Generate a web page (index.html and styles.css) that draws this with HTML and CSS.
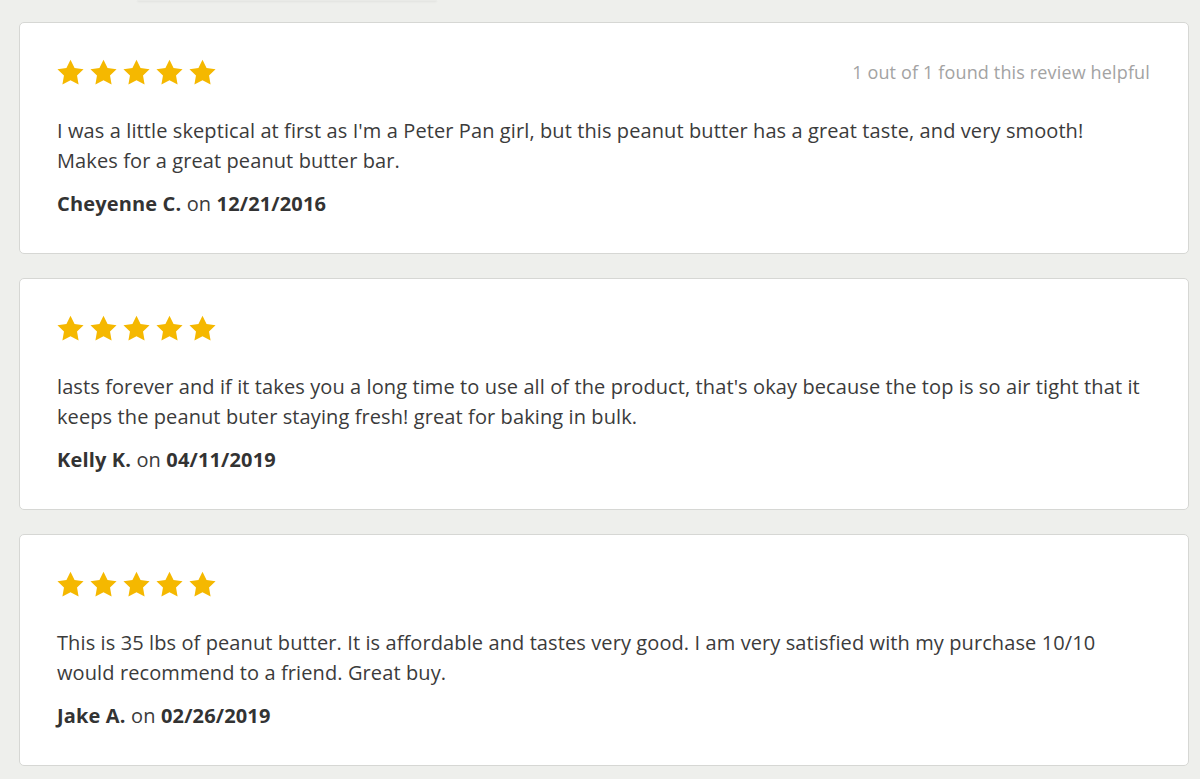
FILE: index.html
```html
<!DOCTYPE html>
<html lang="en">
<head>
<meta charset="utf-8">
<title>Reviews</title>
<link rel="stylesheet" href="styles.css">
</head>
<body>
<div class="page">
  <div class="top-tab"></div>
  <div class="reviews">
    <article class="review">
      <div class="review-head">
        <div class="stars">
          <svg class="star" viewBox="0 0 24 24"><path d="M12 .7l3.6 7.3 8 1.1-5.8 5.6 1.4 7.9L12 18.9l-7.2 3.7 1.4-7.9L.4 9.1l8-1.1z"/></svg>
          <svg class="star" viewBox="0 0 24 24"><path d="M12 .7l3.6 7.3 8 1.1-5.8 5.6 1.4 7.9L12 18.9l-7.2 3.7 1.4-7.9L.4 9.1l8-1.1z"/></svg>
          <svg class="star" viewBox="0 0 24 24"><path d="M12 .7l3.6 7.3 8 1.1-5.8 5.6 1.4 7.9L12 18.9l-7.2 3.7 1.4-7.9L.4 9.1l8-1.1z"/></svg>
          <svg class="star" viewBox="0 0 24 24"><path d="M12 .7l3.6 7.3 8 1.1-5.8 5.6 1.4 7.9L12 18.9l-7.2 3.7 1.4-7.9L.4 9.1l8-1.1z"/></svg>
          <svg class="star" viewBox="0 0 24 24"><path d="M12 .7l3.6 7.3 8 1.1-5.8 5.6 1.4 7.9L12 18.9l-7.2 3.7 1.4-7.9L.4 9.1l8-1.1z"/></svg>
        </div>
        <div class="helpful">1 out of 1 found this review helpful</div>
      </div>
      <p class="review-text">I was a little skeptical at first as I'm a Peter Pan girl, but this peanut butter has a great taste, and very smooth! Makes for a great peanut butter bar.</p>
      <p class="byline"><strong>Cheyenne C.</strong> on <strong>12/21/2016</strong></p>
    </article>
    <article class="review">
      <div class="review-head">
        <div class="stars">
          <svg class="star" viewBox="0 0 24 24"><path d="M12 .7l3.6 7.3 8 1.1-5.8 5.6 1.4 7.9L12 18.9l-7.2 3.7 1.4-7.9L.4 9.1l8-1.1z"/></svg>
          <svg class="star" viewBox="0 0 24 24"><path d="M12 .7l3.6 7.3 8 1.1-5.8 5.6 1.4 7.9L12 18.9l-7.2 3.7 1.4-7.9L.4 9.1l8-1.1z"/></svg>
          <svg class="star" viewBox="0 0 24 24"><path d="M12 .7l3.6 7.3 8 1.1-5.8 5.6 1.4 7.9L12 18.9l-7.2 3.7 1.4-7.9L.4 9.1l8-1.1z"/></svg>
          <svg class="star" viewBox="0 0 24 24"><path d="M12 .7l3.6 7.3 8 1.1-5.8 5.6 1.4 7.9L12 18.9l-7.2 3.7 1.4-7.9L.4 9.1l8-1.1z"/></svg>
          <svg class="star" viewBox="0 0 24 24"><path d="M12 .7l3.6 7.3 8 1.1-5.8 5.6 1.4 7.9L12 18.9l-7.2 3.7 1.4-7.9L.4 9.1l8-1.1z"/></svg>
        </div>
      </div>
      <p class="review-text">lasts forever and if it takes you a long time to use all of the product, that's okay because the top is so air tight that it keeps the peanut buter staying fresh! great for baking in bulk.</p>
      <p class="byline"><strong>Kelly K.</strong> on <strong>04/11/2019</strong></p>
    </article>
    <article class="review">
      <div class="review-head">
        <div class="stars">
          <svg class="star" viewBox="0 0 24 24"><path d="M12 .7l3.6 7.3 8 1.1-5.8 5.6 1.4 7.9L12 18.9l-7.2 3.7 1.4-7.9L.4 9.1l8-1.1z"/></svg>
          <svg class="star" viewBox="0 0 24 24"><path d="M12 .7l3.6 7.3 8 1.1-5.8 5.6 1.4 7.9L12 18.9l-7.2 3.7 1.4-7.9L.4 9.1l8-1.1z"/></svg>
          <svg class="star" viewBox="0 0 24 24"><path d="M12 .7l3.6 7.3 8 1.1-5.8 5.6 1.4 7.9L12 18.9l-7.2 3.7 1.4-7.9L.4 9.1l8-1.1z"/></svg>
          <svg class="star" viewBox="0 0 24 24"><path d="M12 .7l3.6 7.3 8 1.1-5.8 5.6 1.4 7.9L12 18.9l-7.2 3.7 1.4-7.9L.4 9.1l8-1.1z"/></svg>
          <svg class="star" viewBox="0 0 24 24"><path d="M12 .7l3.6 7.3 8 1.1-5.8 5.6 1.4 7.9L12 18.9l-7.2 3.7 1.4-7.9L.4 9.1l8-1.1z"/></svg>
        </div>
      </div>
      <p class="review-text">This is 35 lbs of peanut butter. It is affordable and tastes very good. I am very satisfied with my purchase 10/10 would recommend to a friend. Great buy.</p>
      <p class="byline"><strong>Jake A.</strong> on <strong>02/26/2019</strong></p>
    </article>
  </div>
</div>
</body>
</html>
```

FILE: styles.css
```css
html, body {
  margin: 0;
  padding: 0;
  background: #eeefec;
}

body {
  font-family: "Open Sans", "Lato", Arial, sans-serif;
  color: #3b3b3b;
  -webkit-font-smoothing: antialiased;
}

.page {
  padding: 0 11px 0 19px;
}

.top-tab {
  width: 300px;
  height: 1px;
  margin-left: 118px;
  margin-bottom: 21px;
  background: #e9eae7;
  border-radius: 0 0 6px 6px;
  box-shadow: 0 1px 2px rgba(0, 0, 0, 0.08);
}

.reviews {
  display: flex;
  flex-direction: column;
  gap: 24px;
}

.review {
  box-sizing: border-box;
  height: 232px;
  background: #fff;
  border: 1px solid #d6d7d4;
  border-radius: 5px;
  padding: 36px 40px 0 37px;
}

.review-head {
  display: flex;
  align-items: center;
  justify-content: space-between;
  height: 26px;
  margin-right: -2px;
}

.stars {
  display: flex;
  gap: 6px;
}

.star {
  width: 27px;
  height: 27px;
  fill: #f5b800;
  display: block;
}

.helpful {
  font-size: 18px;
  letter-spacing: 0.15px;
  color: #a3a3a3;
}

.review-text {
  margin: 31px 0 0;
  font-size: 20px;
  letter-spacing: 0.1px;
  line-height: 30px;
  color: #3b3b3b;
}

.byline {
  margin: 14px 0 0;
  font-size: 20px;
  letter-spacing: 0.15px;
  line-height: 28px;
  color: #3b3b3b;
}

.byline strong {
  font-weight: 700;
  color: #333;
}
```
